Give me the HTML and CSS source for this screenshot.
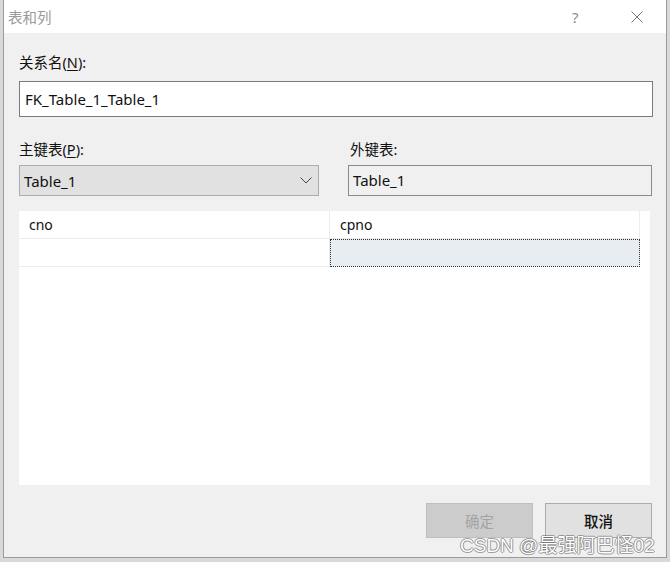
FILE: index.html
```html
<!DOCTYPE html>
<html lang="zh-CN">
<head>
    <meta charset="UTF-8">
    <title>表和列</title>
    <link rel="stylesheet" href="styles.css">
</head>
<body>
    <div class="dialog">
        <!-- Заголовок окна -->
        <div class="titlebar">
            <span class="title">表和列</span>
            <span class="help">?</span>
            <span class="close">
                <svg width="12" height="12" viewBox="0 0 12 12">
                    <path d="M0.5 0.5 L11.5 11.5 M11.5 0.5 L0.5 11.5" stroke="#777" stroke-width="1" fill="none"/>
                </svg>
            </span>
        </div>

        <div class="content">
            <div class="label">关系名(<u>N</u>):</div>
            <div class="textbox">FK_Table_1_Table_1</div>

            <div class="columns">
                <div class="col col-left">
                    <div class="label">主键表(<u>P</u>):</div>
                    <div class="combo">
                        <span>Table_1</span>
                        <svg width="12" height="7" viewBox="0 0 12 7">
                            <path d="M0.5 0.5 L6 6 L11.5 0.5" stroke="#444" stroke-width="1" fill="none"/>
                        </svg>
                    </div>
                </div>
                <div class="col col-right">
                    <div class="label">外键表:</div>
                    <div class="readonly">Table_1</div>
                </div>
            </div>

            <div class="grid">
                <table>
                    <tr>
                        <td class="c1">cno</td>
                        <td class="c2">cpno</td>
                    </tr>
                    <tr>
                        <td class="c1"></td>
                        <td class="c2 current"></td>
                    </tr>
                </table>
            </div>

            <div class="buttons">
                <button class="btn btn-disabled" disabled>确定</button>
                <button class="btn btn-cancel">取消</button>
            </div>
        </div>
    </div>

    <div class="watermark">CSDN @最强阿巴怪02</div>
</body>
</html>
```

FILE: styles.css
```css
body {
    margin: 0;
    padding: 0;
    width: 670px;
    height: 562px;
    overflow: hidden;
    background-color: #d9d9d9;
    font-family: "Noto Sans", "Noto Sans CJK SC", sans-serif;
    position: relative;
}

.dialog {
    margin-left: 3px;
    width: 662px;
    height: 557px;
    border-left: 1px solid #9a9a9a;
    border-right: 1px solid #9a9a9a;
    border-bottom: 1px solid #9a9a9a;
    background-color: #f0f0f0;
    display: flex;
    flex-direction: column;
}

.titlebar {
    height: 33px;
    background-color: #fff;
    display: flex;
    align-items: center;
    flex-shrink: 0;
}

.title {
    margin-left: 4px;
    font-size: 14.5px;
    color: #9a9a9a;
    flex: 1;
}

.help {
    font-size: 15px;
    color: #8a8a8a;
    width: 12px;
    margin-right: 47px;
}

.close {
    display: flex;
    margin-right: 23px;
}

.content {
    padding: 19px 13px 0 15px;
    display: flex;
    flex-direction: column;
}

.label {
    font-size: 14.5px;
    line-height: 20px;
    height: 20px;
    color: #111;
}

.label u {
    text-decoration: underline;
    text-underline-offset: 2px;
}

.textbox {
    margin-top: 9px;
    height: 34px;
    border: 1px solid #7a7a7a;
    background-color: #fff;
    font-size: 15px;
    line-height: 34px;
    padding-left: 5px;
    color: #111;
}

.columns {
    margin-top: 22px;
    display: flex;
    gap: 29px;
}

.col-left {
    width: 300px;
}

.col-right {
    width: 304px;
}

.col-right .label {
    padding-left: 2px;
}

.combo {
    margin-top: 6px;
    height: 29px;
    border: 1px solid #adadad;
    background-color: #e1e1e1;
    display: flex;
    align-items: center;
    justify-content: space-between;
    padding: 0 6px 0 4px;
    font-size: 15px;
    color: #111;
}

.readonly {
    margin-top: 6px;
    height: 29px;
    border: 1px solid #8a8a8a;
    background-color: #f0f0f0;
    font-size: 15px;
    line-height: 29px;
    padding-left: 4px;
    color: #111;
}

.grid {
    margin-top: 15px;
    width: 631px;
    height: 274px;
    background-color: #fff;
}

table {
    border-collapse: collapse;
    width: 621px;
}

td {
    height: 27px;
    padding: 0 0 0 10px;
    font-size: 14px;
    color: #111;
    border-right: 1px solid #ececec;
    border-bottom: 1px solid #ececec;
}

.c1 {
    width: 300px;
}

.current {
    background-color: #e8edf2;
    outline: 1px dotted #333;
    outline-offset: -1px;
}

.buttons {
    margin-top: 18px;
    display: flex;
    justify-content: flex-end;
    gap: 12px;
    padding-right: 1px;
}

.btn {
    width: 107px;
    height: 35px;
    border: 1px solid #adadad;
    background-color: #e1e1e1;
    font-family: "Noto Sans CJK SC", sans-serif;
    font-size: 14.5px;
    color: #111;
    padding: 0;
}

.btn-cancel {
    font-weight: 500;
}

.btn-disabled {
    background-color: #cccccc;
    border-color: #bfbfbf;
    color: #a3a3a3;
}

.watermark {
    position: absolute;
    left: 460px;
    top: 530px;
    font-family: "Liberation Sans", "Noto Sans CJK SC", sans-serif;
    font-size: 19px;
    color: #fff;
    text-shadow: 1px 0 rgba(90, 90, 90, 0.55), -1px 0 rgba(90, 90, 90, 0.55), 0 1px rgba(90, 90, 90, 0.55), 0 -1px rgba(90, 90, 90, 0.55);
    white-space: nowrap;
}
```
